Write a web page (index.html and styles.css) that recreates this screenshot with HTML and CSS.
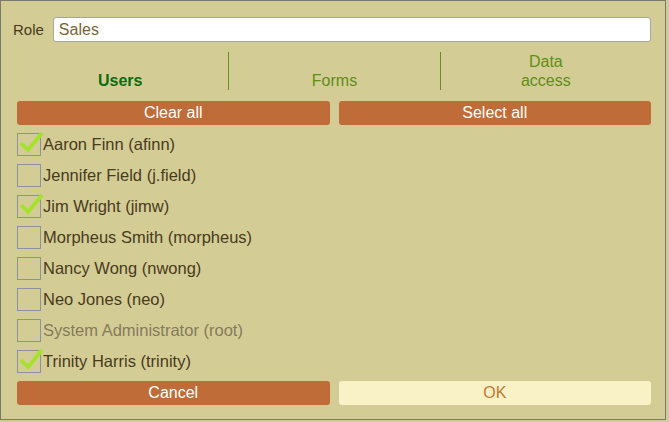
FILE: index.html
```html
<!DOCTYPE html>
<html lang="en">
<head>
  <meta charset="UTF-8" />
  <title>Role</title>
  <link rel="stylesheet" href="styles.css">
</head>
<body>

<div class="dialog">
  <div class="role-row">
    <label for="role">Role</label>
    <input id="role" type="text" value="Sales">
  </div>

  <div class="tabs">
    <div class="tab active">Users</div>
    <div class="tab">Forms</div>
    <div class="tab">Data<br>access</div>
  </div>

  <div class="btn-row">
    <button class="btn">Clear all</button>
    <button class="btn">Select all</button>
  </div>

  <ul class="users">
    <li class="checked"><span class="box"></span>Aaron Finn (afinn)</li>
    <li><span class="box"></span>Jennifer Field (j.field)</li>
    <li class="checked"><span class="box"></span>Jim Wright (jimw)</li>
    <li><span class="box"></span>Morpheus Smith (morpheus)</li>
    <li><span class="box"></span>Nancy Wong (nwong)</li>
    <li><span class="box"></span>Neo Jones (neo)</li>
    <li class="disabled"><span class="box"></span>System Administrator (root)</li>
    <li class="checked"><span class="box"></span>Trinity Harris (trinity)</li>
  </ul>

  <div class="btn-row bottom">
    <button class="btn">Cancel</button>
    <button class="btn light">OK</button>
  </div>
</div>

<script>
document.querySelectorAll('.users li.checked .box').forEach(b => {
  b.innerHTML = '<svg class="tick" width="28" height="26" viewBox="0 0 28 26"><polyline points="3,12 10,19 24,2" fill="none" stroke="#a4e22c" stroke-width="3.8"/></svg>';
});
</script>

</body>
</html>
```

FILE: styles.css
```css
html, body {
  margin: 0;
  padding: 0;
  background: #cfcaa0;
  font-family: 'Liberation Sans', Arial, sans-serif;
}
.dialog {
  box-sizing: border-box;
  width: 666px;
  height: 420px;
  padding: 16px 14px 0 16px;
  background: #d3cd95;
  border: 1px solid #7a7a6a;
}
.role-row {
  display: flex;
  align-items: center;
  gap: 9px;
  height: 25px;
}
.role-row label {
  color: #4a3a1c;
  font-size: 15px;
  margin-left: -4px;
}
.role-row input {
  flex: 1;
  box-sizing: border-box;
  height: 25px;
  margin: 0;
  padding: 0 5px;
  border: 1px solid #a3a79c;
  border-radius: 3px;
  background: #fff;
  color: #7a6436;
  font-family: inherit;
  font-size: 16px;
  outline: none;
}
.tabs {
  display: grid;
  grid-template-columns: 1fr 1fr 1fr;
  margin-top: 10px;
  height: 37px;
}
.tab {
  display: flex;
  align-items: flex-end;
  justify-content: center;
  text-align: center;
  font-size: 16px;
  line-height: 19px;
  color: #5f8e16;
  border-left: 1px solid #6b8a22;
}
.tab:first-child { border-left: none; }
.tab.active {
  color: #0d6a10;
  font-weight: bold;
  padding-right: 5px;
}
.btn-row {
  display: grid;
  grid-template-columns: 1fr 1fr;
  gap: 9px;
  margin-top: 12px;
}
.btn {
  height: 24px;
  border: none;
  border-radius: 3px;
  background: #c06c38;
  color: #fff;
  font-family: inherit;
  font-size: 16px;
  padding: 0;
  cursor: pointer;
}
.btn.light {
  background: #f8f2c6;
  color: #c2772e;
}
.users {
  list-style: none;
  margin: 4px 0 0;
  padding: 0;
}
.users li {
  display: flex;
  align-items: center;
  height: 31px;
  font-size: 16.5px;
  color: #4a3a1c;
}
.users li.disabled { color: #857a5c; }
.box {
  position: relative;
  box-sizing: border-box;
  width: 24px;
  height: 23px;
  margin-right: 2px;
  border: 1px solid #8a94a0;
  flex: none;
}
.tick {
  position: absolute;
  left: 0;
  top: -3px;
}
.btn-row.bottom {
  margin-top: 4px;
}
```
